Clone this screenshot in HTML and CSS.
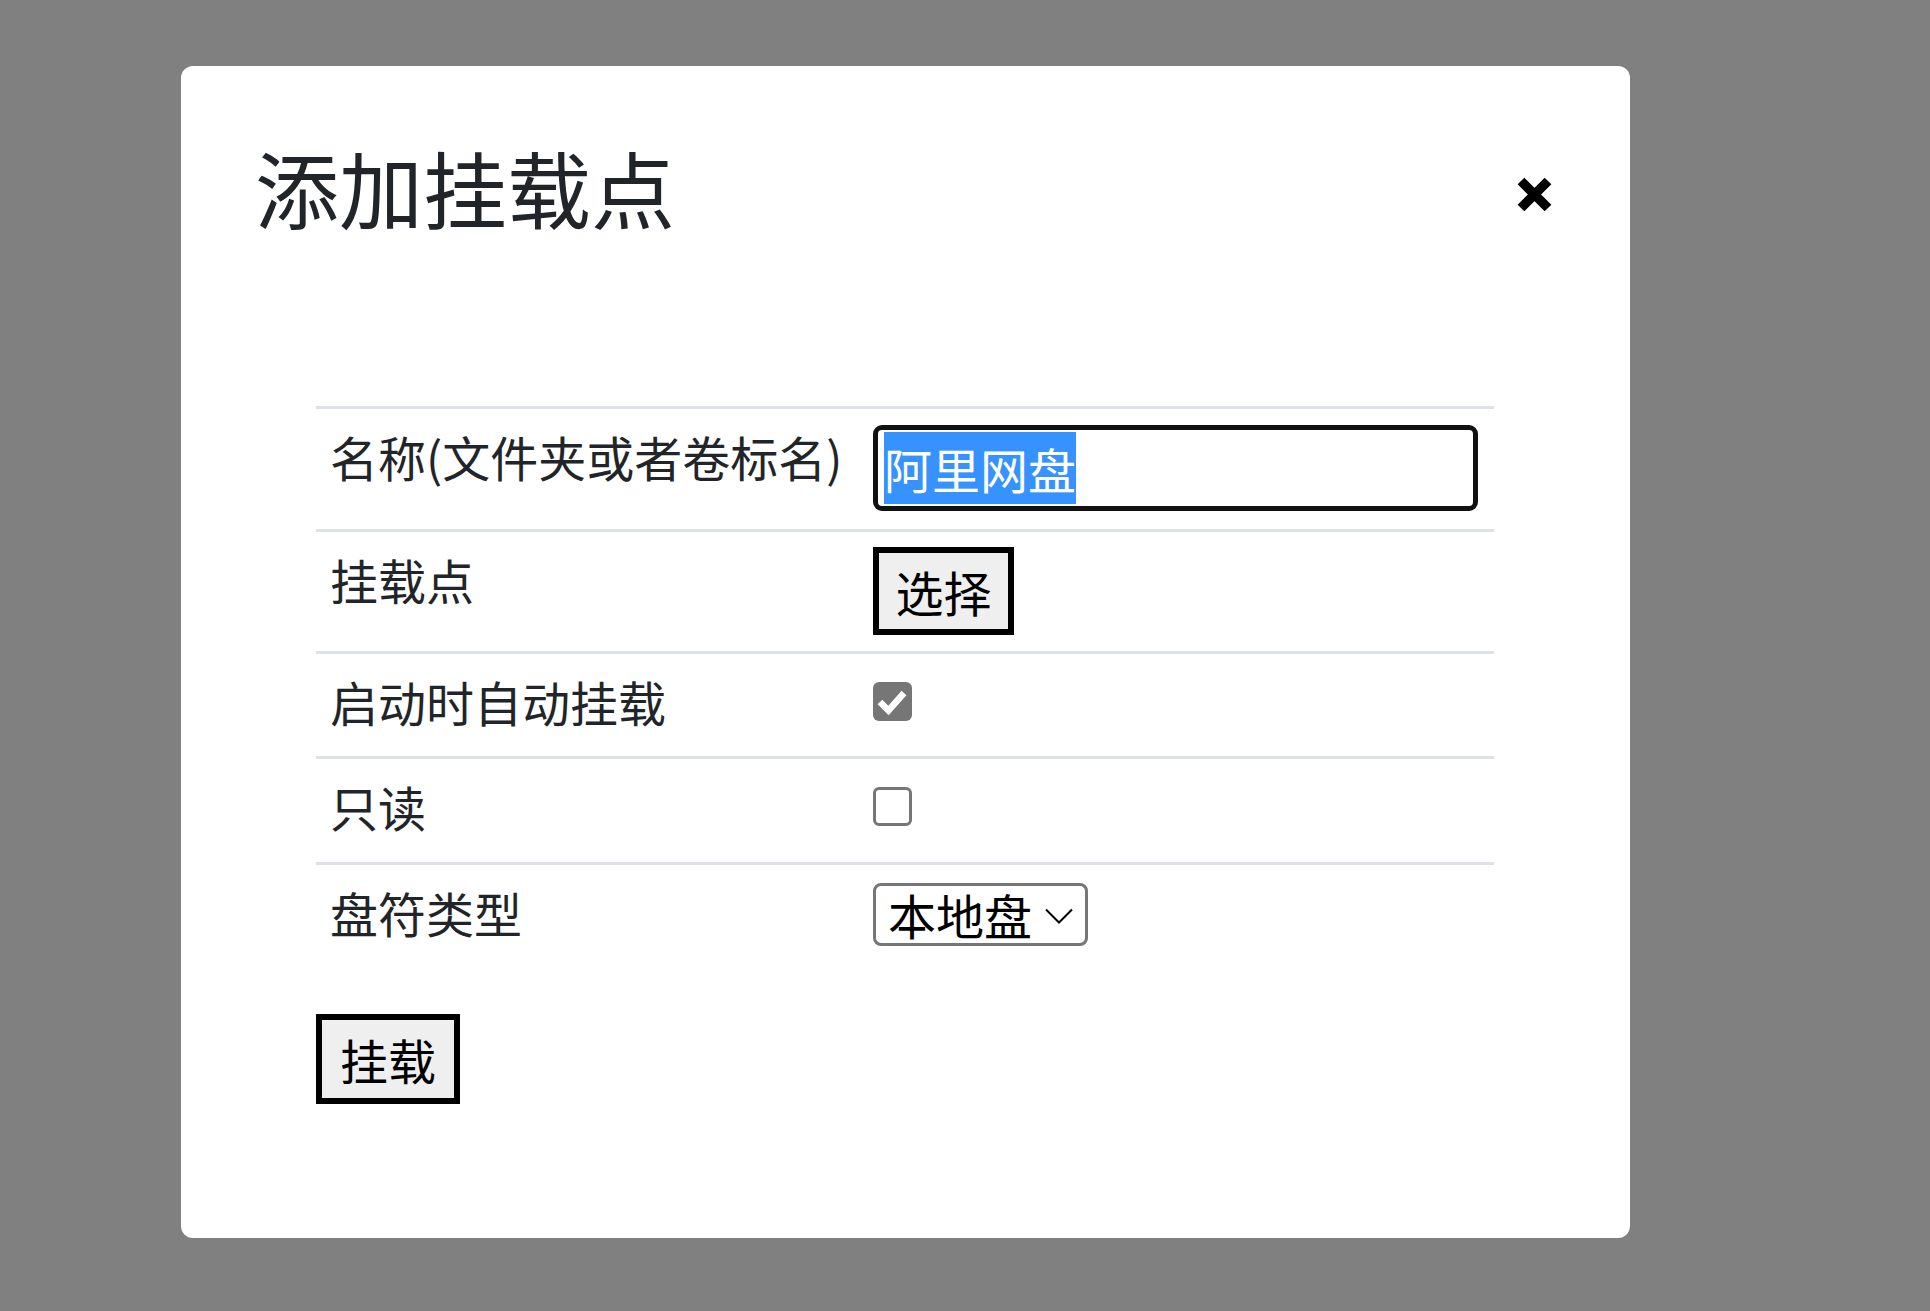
FILE: index.html
```html
<!DOCTYPE html>
<html lang="zh-CN">
<head>
<meta charset="utf-8">
<title>添加挂载点</title>
<link rel="stylesheet" href="styles.css">
</head>
<body>
<div class="modal">
  <div class="modal-header">
    <h3 class="modal-title">添加挂载点</h3>
    <button class="close" type="button" aria-label="Close">
      <svg width="37" height="37" viewBox="0 0 37 37"><path d="M5 5 L32 32 M32 5 L5 32" stroke="#000" stroke-width="9.5" stroke-linecap="butt" fill="none"/></svg>
    </button>
  </div>
  <div class="modal-body">
    <table class="mount-table">
      <tr class="row-name">
        <td class="label">名称(文件夹或者卷标名)</td>
        <td class="value"><div class="text-input"><span class="selected">阿里网盘</span></div></td>
      </tr>
      <tr class="row-point">
        <td class="label">挂载点</td>
        <td class="value"><button class="btn btn-choose" type="button">选择</button></td>
      </tr>
      <tr class="row-auto">
        <td class="label">启动时自动挂载</td>
        <td class="value"><span class="check checked"><svg width="39" height="39" viewBox="0 0 39 39"><path d="M7 20 L15.5 28.5 L31 11" stroke="#fff" stroke-width="6.5" fill="none" stroke-linecap="butt"/></svg></span></td>
      </tr>
      <tr class="row-ro">
        <td class="label">只读</td>
        <td class="value"><span class="check"></span></td>
      </tr>
      <tr class="row-type">
        <td class="label">盘符类型</td>
        <td class="value"><div class="select"><span class="select-text">本地盘</span><svg class="chev" width="28" height="16" viewBox="0 0 28 16"><path d="M1 1.5 L14 14.5 L27 1.5" stroke="#000" stroke-width="2" fill="none"/></svg></div></td>
      </tr>
    </table>
    <button class="btn btn-mount" type="button">挂载</button>
  </div>
</div>
</body>
</html>
```
FILE: styles.css
```css
html, body {
  margin: 0;
  padding: 0;
}
body {
  background: #808080;
  min-height: 1311px;
  font-family: "Noto Sans CJK SC", "Noto Sans", sans-serif;
  color: #212529;
}
.modal {
  margin: 66px 0 0 181px;
  width: 1449px;
  height: 1172px;
  background: #fff;
  border-radius: 12px;
  box-sizing: border-box;
  display: flex;
  flex-direction: column;
}
.modal-header {
  display: flex;
  justify-content: space-between;
  align-items: flex-start;
  padding: 71px 77px 0 74px;
}
.modal-title {
  margin: 0;
  font-size: 84px;
  font-weight: 400;
  line-height: 100px;
  color: #212529;
}
.close {
  margin-top: 39px;
  padding: 0;
  border: 0;
  background: transparent;
  width: 37px;
  height: 37px;
  display: block;
}
.close svg { display: block; }
.modal-body {
  padding: 169px 136px 0 135px;
}
.mount-table {
  width: 1178px;
  border-collapse: collapse;
}
.mount-table td {
  border-top: 3px solid #dee2e6;
  padding: 14px;
  vertical-align: top;
}
.mount-table td.label {
  padding-top: 11px;
  padding-bottom: 17px;
}
.label {
  width: 515px;
  font-size: 48px;
  line-height: 72px;
  color: #212529;
  white-space: nowrap;
}
.value {
  font-size: 48px;
  line-height: 72px;
  color: #000;
}
.text-input {
  margin: 2px 0 4px;
  width: 605px;
  height: 86px;
  box-sizing: border-box;
  border: 5px solid #111;
  border-radius: 9px;
  padding: 2px 6px;
  background: #fff;
}
.selected {
  display: inline-block;
  background: #3592fe;
  color: #fff;
  font-size: 48px;
  line-height: 72px;
}
.btn {
  display: block;
  box-sizing: border-box;
  background: #efefef;
  border: 6px solid #000;
  color: #000;
  font-family: "Noto Sans CJK SC", "Noto Sans", sans-serif;
  font-size: 48px;
  line-height: 72px;
  padding: 2px 0;
  text-align: center;
}
.btn-choose {
  margin: 1px 0 2px;
  width: 141px;
  height: 88px;
}
.btn-mount {
  margin-top: 47px;
  width: 144px;
  height: 90px;
}
.row-auto .value { height: 74px; }
.row-ro .value { height: 75px; }
.check {
  display: block;
  margin-top: 14px;
  width: 39px;
  height: 39px;
  box-sizing: border-box;
  border: 3px solid #767676;
  border-radius: 6px;
  background: #fff;
}
.check.checked {
  border: 0;
  background: #767676;
}
.check svg { display: block; }
.row-type .value { height: 74px; }
.select {
  margin-top: 4px;
  width: 215px;
  height: 63px;
  box-sizing: border-box;
  border: 3px solid #767676;
  border-radius: 8px;
  display: flex;
  align-items: center;
  padding: 0 0 0 12px;
}
.select-text {
  font-size: 48px;
  line-height: 57px;
  color: #000;
}
.chev {
  margin-left: 13px;
  margin-top: 2px;
}
```
